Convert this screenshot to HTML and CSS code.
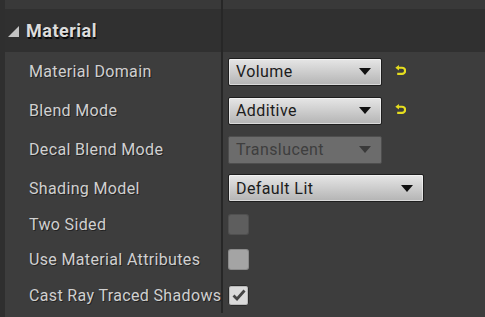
FILE: index.html
```html
<!DOCTYPE html>
<html lang="en">
<head>
    <meta charset="utf-8">
    <title>Details - Material</title>
    <link rel="stylesheet" href="styles.css">
</head>
<body>
    <div class="panel">
        <div class="gutter"></div>
        <div class="details">
            <div class="row top-strip">
                <div class="name"></div>
                <div class="value"></div>
            </div>

            <div class="row category">
                <div class="name">
                    <span class="expander"></span>
                    <span class="category-title">Material</span>
                </div>
                <div class="value"></div>
            </div>

            <div class="row combo-row">
                <div class="name">Material Domain</div>
                <div class="value">
                    <div class="combo">
                        <span>Volume</span>
                        <span class="arrow"></span>
                    </div>
                    <svg class="reset" width="11" height="11" viewBox="0 0 10 10">
                        <path d="M0.3 2.5 L3.6 0 L3.6 5 Z" fill="#e6de1e"/>
                        <path d="M3 2.5 H6.4 A2.8 2.8 0 0 1 6.4 8.1 H2" fill="none" stroke="#e6de1e" stroke-width="2"/>
                    </svg>
                </div>
            </div>

            <div class="row combo-row">
                <div class="name">Blend Mode</div>
                <div class="value">
                    <div class="combo">
                        <span>Additive</span>
                        <span class="arrow"></span>
                    </div>
                    <svg class="reset" width="11" height="11" viewBox="0 0 10 10">
                        <path d="M0.3 2.5 L3.6 0 L3.6 5 Z" fill="#e6de1e"/>
                        <path d="M3 2.5 H6.4 A2.8 2.8 0 0 1 6.4 8.1 H2" fill="none" stroke="#e6de1e" stroke-width="2"/>
                    </svg>
                </div>
            </div>

            <div class="row combo-row">
                <div class="name">Decal Blend Mode</div>
                <div class="value">
                    <div class="combo disabled">
                        <span>Translucent</span>
                        <span class="arrow"></span>
                    </div>
                </div>
            </div>

            <div class="row combo-row short">
                <div class="name">Shading Model</div>
                <div class="value">
                    <div class="combo wide">
                        <span>Default Lit</span>
                        <span class="arrow"></span>
                    </div>
                </div>
            </div>

            <div class="row check-row first">
                <div class="name">Two Sided</div>
                <div class="value">
                    <span class="checkbox disabled"></span>
                </div>
            </div>

            <div class="row check-row">
                <div class="name">Use Material Attributes</div>
                <div class="value">
                    <span class="checkbox"></span>
                </div>
            </div>

            <div class="row check-row">
                <div class="name">Cast Ray Traced Shadows</div>
                <div class="value">
                    <span class="checkbox checked">
                        <svg width="14" height="12" viewBox="0 0 14 12">
                            <path d="M1.5 6.5 L5 10 L12.5 1.5" fill="none" stroke="#454545" stroke-width="2.8"/>
                        </svg>
                    </span>
                </div>
            </div>
        </div>
    </div>
</body>
</html>
```

FILE: styles.css
```css
body {
    margin: 0;
    background-color: #3d3d3d;
    font-family: Roboto, "Liberation Sans", Arial, sans-serif;
    overflow: hidden;
}
.panel {
    display: flex;
    height: 317px;
}
.gutter {
    width: 5px;
    background-color: #2f2f2f;
    flex: none;
}
.details {
    flex: 1;
    display: flex;
    flex-direction: column;
}
.row {
    display: flex;
    align-items: stretch;
    height: 39px;
}
.name {
    width: 216px;
    flex: none;
    display: flex;
    align-items: center;
    padding-left: 24px;
    box-sizing: border-box;
    color: #d0d0d0;
    font-size: 16px;
    letter-spacing: 0.35px;
    text-shadow: 1px 1px 0 rgba(0,0,0,0.45);
    white-space: nowrap;
}
.value {
    flex: 1;
    display: flex;
    align-items: center;
    padding-left: 5px;
    border-left: 2px solid #272727;
}
.top-strip {
    height: 9px;
    background-color: #393939;
}
.category {
    height: 43px;
    background-color: #303030;
}
.category .name {
    padding-left: 3px;
}
.expander {
    width: 0;
    height: 0;
    border-left: 11px solid transparent;
    border-bottom: 11px solid #c4c4c4;
    margin: 2px 7px 0 0;
}
.category-title {
    font-weight: bold;
    font-size: 18px;
    letter-spacing: 0.5px;
    color: #dcdcdc;
    text-shadow: 1px 2px 0 rgba(0,0,0,0.8);
}
.row.short {
    height: 38px;
}
.combo {
    width: 154px;
    height: 28px;
    box-sizing: border-box;
    display: flex;
    align-items: center;
    justify-content: space-between;
    padding: 0 10px 0 7px;
    border: 1px solid #1e1e1e;
    border-radius: 2px;
    background: linear-gradient(#e6e6e6, #c8c8c8 60%, #b4b4b4);
    box-shadow: inset 0 0 0 1px rgba(255,255,255,0.5);
    color: #1c1c1c;
    font-size: 16px;
    letter-spacing: 0.4px;
}
.combo.wide {
    width: 196px;
}
.arrow {
    width: 0;
    height: 0;
    border-left: 6px solid transparent;
    border-right: 6px solid transparent;
    border-top: 7px solid #111111;
}
.combo.disabled {
    background: #6c6c6c;
    box-shadow: none;
    border-color: #4e4e4e;
    color: #3e3e3e;
}
.combo.disabled .arrow {
    border-top-color: #3a3a3a;
}
.reset {
    margin-left: 13px;
    margin-top: -2px;
}
.check-row {
    height: 36px;
}
.check-row.first {
    height: 34px;
}
.checkbox {
    width: 21px;
    height: 21px;
    border-radius: 3px;
    background-color: #a4a4a4;
    box-shadow: inset 0 0 0 1px rgba(0,0,0,0.15);
    display: flex;
    align-items: center;
    justify-content: center;
}
.checkbox.disabled {
    background-color: #5e5e5e;
}
.checkbox.checked {
    background-color: #dadada;
    border: 1px solid #2a2a2a;
    box-sizing: border-box;
}
```
